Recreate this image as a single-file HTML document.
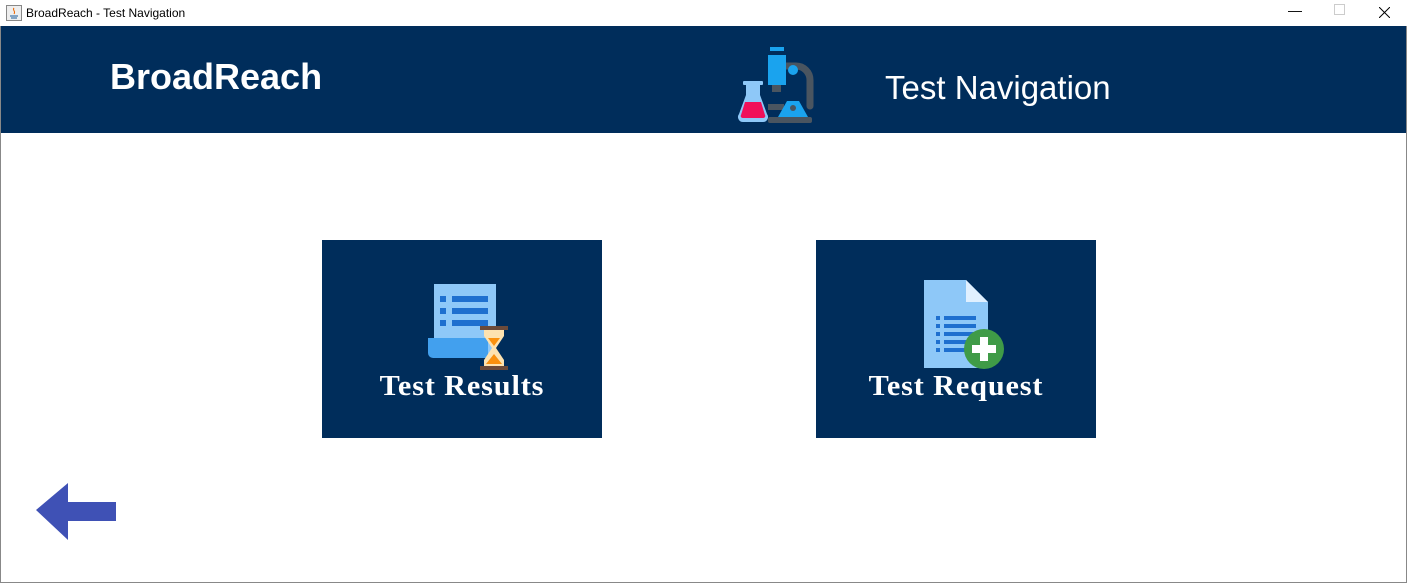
<!DOCTYPE html><html><head><style>
body{margin:0;width:1407px;height:583px;background:#fff;position:relative;overflow:hidden;font-family:"Liberation Sans",sans-serif}
.tb{position:absolute;top:0;left:0;width:1407px;height:26px;background:#fff;font-size:12px}
.hdr{position:absolute;top:26px;left:1px;width:1405px;height:107px;background:#002d5b}
.btn{position:absolute;top:240px;width:280px;height:198px;background:#002d5b}
.bt{position:absolute;top:131px;width:100%;text-align:center;color:#fff;font-family:"Liberation Serif",serif;font-weight:bold;font-size:28px;letter-spacing:0.8px;transform:scaleX(1.08)}
</style></head><body>
<div class="tb">
<svg style="position:absolute;left:6px;top:5px" width="16" height="16"><rect x="0.5" y="0.5" width="15" height="15" fill="#eee" stroke="#888"/><path d="M4 11h8M5 13h6" stroke="#47a" stroke-width="1.3"/><path d="M8 3c-2 2 2 3 0 6" stroke="#e60" fill="none"/></svg>
<span style="position:absolute;left:26px;top:6px">BroadReach - Test Navigation</span>
<span style="position:absolute;left:1288px;top:2px;font-size:14px">&#8212;</span>
<span style="position:absolute;left:1334px;top:4px;width:9px;height:9px;border:1px solid #ccc"></span>
<svg style="position:absolute;left:1379px;top:7px" width="11" height="11"><path d="M0 0L11 11M11 0L0 11" stroke="#000"/></svg>
</div>
<div style="position:absolute;left:0;top:26px;width:1px;height:557px;background:#888"></div>
<div style="position:absolute;right:0;top:26px;width:1px;height:557px;background:#888"></div>
<div style="position:absolute;left:0;bottom:0;width:1407px;height:1px;background:#888"></div>
<div class="hdr">
<div style="position:absolute;left:109px;top:30px;color:#fff;font-weight:bold;font-size:36px">BroadReach</div>
<div style="position:absolute;left:884px;top:43px;color:#fff;font-size:33px">Test Navigation</div>
</div>
<svg style="position:absolute;left:720px;top:30px" width="120" height="100">
<rect x="50" y="17" width="14" height="4" fill="#1aa3ee"/>
<rect x="52" y="52" width="9" height="10" fill="#4a5560"/>
<path d="M66 36h10a14 14 0 0 1 14 14v26" stroke="#4a5560" stroke-width="7" fill="none" stroke-linecap="round"/>
<circle cx="73" cy="40" r="5" fill="#1aa3ee"/>
<rect x="48" y="25" width="18" height="30" fill="#1aa3ee"/>
<rect x="48" y="74" width="16" height="6" fill="#4a5560"/>
<path d="M58 87L67 71h12l9 16z" fill="#1aa3ee"/>
<circle cx="73" cy="78" r="3" fill="#4a5560"/>
<rect x="48" y="87" width="44" height="6" rx="2" fill="#4a5560"/>
<g transform="translate(3,0)">
<rect x="20" y="51" width="20" height="4" rx="1" fill="#8ec8f8"/>
<path d="M23 55h14v10l7 19a5 5 0 0 1-4 8h-20a5 5 0 0 1-4-8l7-19z" fill="#8ec8f8"/>
<path d="M22 72h16l4 13a2 2 0 0 1-2 3h-20a2 2 0 0 1-2-3z" fill="#f0105a"/>
</g>
</svg>
<div class="btn" style="left:322px">
<svg style="position:absolute;left:96px;top:36px" width="100" height="100">
<rect x="16" y="8" width="62" height="70" fill="#8ec8f8"/>
<path d="M10 62h60v20h-55a5 5 0 0 1-5-5z" fill="#42a0ee"/>
<rect x="22" y="20" width="6" height="6" fill="#1e6fcf"/><rect x="34" y="20" width="36" height="6" fill="#1e6fcf"/>
<rect x="22" y="32" width="6" height="6" fill="#1e6fcf"/><rect x="34" y="32" width="36" height="6" fill="#1e6fcf"/>
<rect x="22" y="44" width="6" height="6" fill="#1e6fcf"/><rect x="34" y="44" width="36" height="6" fill="#1e6fcf"/>
<rect x="62" y="50" width="28" height="4" fill="#6b4a3a"/><rect x="62" y="90" width="28" height="4" fill="#6b4a3a"/>
<path d="M66 54h20v6l-8 12 8 12v6h-20v-6l8-12-8-12z" fill="#fde2b0"/>
<path d="M70 62h12l-6 8zM68 88l8-10 8 10z" fill="#f9900e"/>
</svg>
<div class="bt">Test Results</div></div>
<div class="btn" style="left:816px">
<svg style="position:absolute;left:84px;top:36px" width="120" height="100">
<path d="M24 4h42l22 22v66h-64z" fill="#8ec8f8"/>
<path d="M66 4l22 22h-22z" fill="#e0f0ff"/>
<g fill="#1e6fcf"><rect x="36" y="40" width="4" height="4"/><rect x="44" y="40" width="32" height="4"/><rect x="36" y="48" width="4" height="4"/><rect x="44" y="48" width="32" height="4"/><rect x="36" y="56" width="4" height="4"/><rect x="44" y="56" width="32" height="4"/><rect x="36" y="64" width="4" height="4"/><rect x="44" y="64" width="32" height="4"/><rect x="36" y="72" width="4" height="4"/><rect x="44" y="72" width="24" height="4"/></g>
<circle cx="84" cy="73" r="20" fill="#3f9b47"/>
<path d="M80 61h8v8h8v8h-8v8h-8v-8h-8v-8h8z" fill="#fff"/>
</svg>
<div class="bt">Test Request</div></div>
<svg style="position:absolute;left:34px;top:481px" width="84" height="60"><path d="M2 29L34 2v19h48v19h-48v19z" fill="#3f51b5"/></svg>
</body></html>
